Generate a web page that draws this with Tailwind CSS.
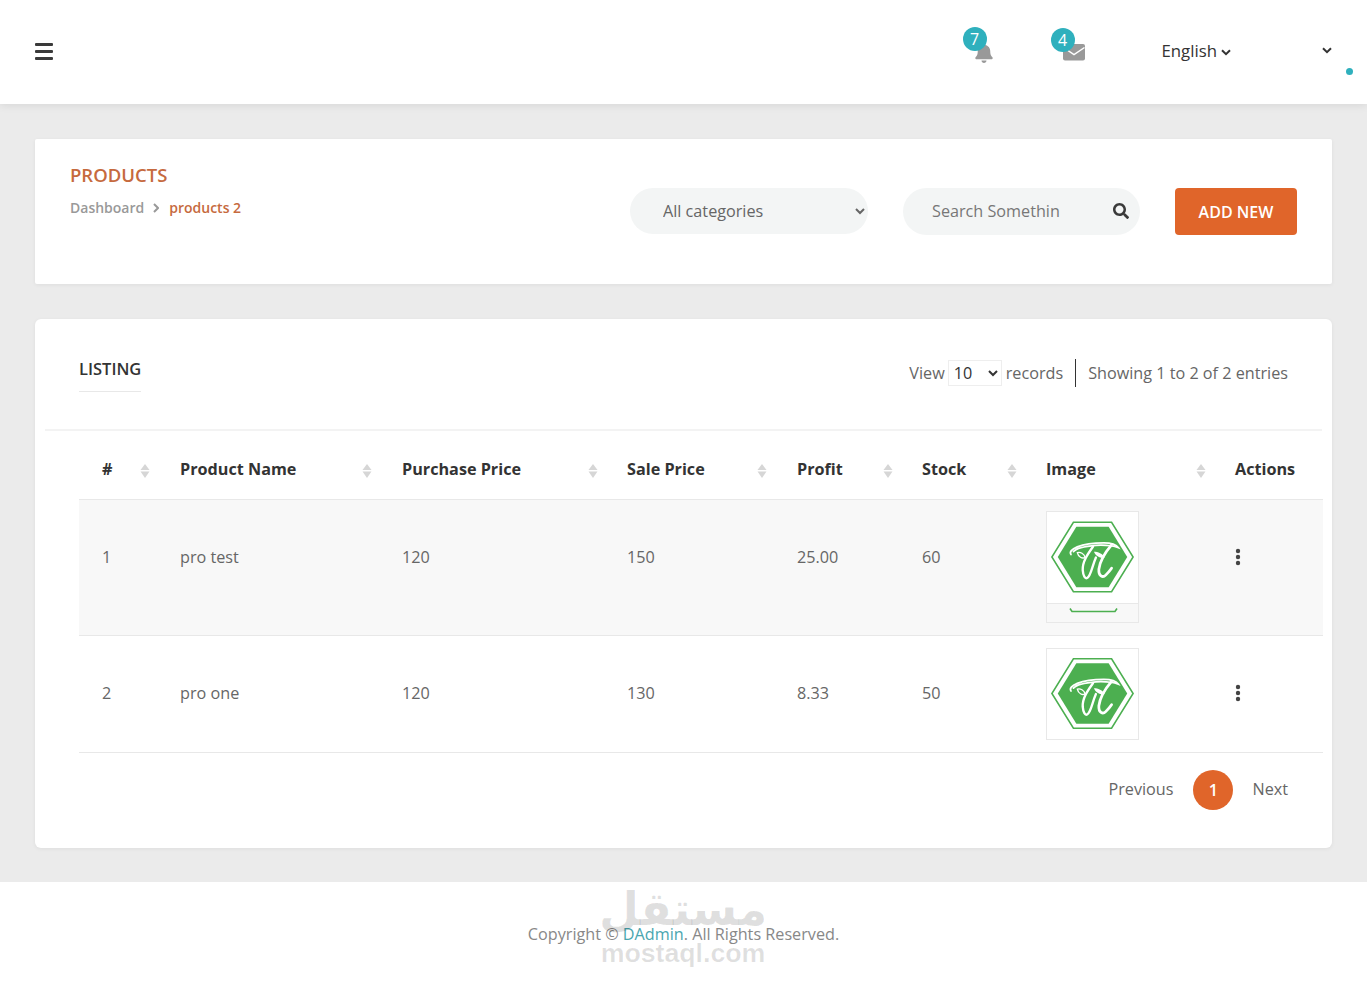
<!DOCTYPE html>
<html lang="en">
<head>
<meta charset="utf-8">
<title>Products</title>
<script src="https://cdn.jsdelivr.net/npm/@tailwindcss/browser@4"></script>
</head>
<body class="bg-[#ebebeb] font-['Open_Sans',sans-serif] text-[16.2px] text-[#666]">
<svg class="hidden" width="0" height="0">
  <symbol id="logo" viewBox="0 0 93 92">
    <path d="M27 10H66L88 45.5L66 81H27L5 45.5Z" fill="#fff" stroke="#4caf50" stroke-width="1.6"/>
    <path d="M30 14.5H63L82 45.5L63 76.5H30L11 45.5Z" fill="#4caf50"/>
    <path d="M24.5 43C21 38 34 31 58 31C65 31 71 33 73 36C66 33.5 58 33.2 50 33.6C40 34.5 30 36.5 27 40" fill="none" stroke="#fff" stroke-width="1.8" stroke-linecap="round"/>
    <path d="M31 41C34 40 38 42 39 46C36 47.5 32 45.5 31 41Z" fill="none" stroke="#fff" stroke-width="1.4"/>
    <path d="M47 35C42 42 36 50 36.5 59C37 65 39 68 41 67C45 65 46 55 50 46" fill="none" stroke="#fff" stroke-width="2.4" stroke-linecap="round"/>
    <path d="M48 40C52 40 57 42 59 46C55 47 50 45 48 40Z" fill="#fff"/>
    <path d="M66 33C60 40 54 50 53 58C52.5 65 57 67 60 64C62 62 64 60 66 57" fill="none" stroke="#fff" stroke-width="2.8" stroke-linecap="round"/>
  </symbol>
  <symbol id="sort" viewBox="0 0 10 14">
    <path d="M5 0L9.5 6H.5Z" fill="#d6d6d6"/><path d="M5 14L9.5 7.5H.5Z" fill="#d6d6d6"/>
  </symbol>
  <symbol id="kebab" viewBox="0 0 6 18">
    <circle cx="3" cy="3" r="2.2" fill="#444"/><circle cx="3" cy="9" r="2.2" fill="#444"/><circle cx="3" cy="15" r="2.2" fill="#444"/>
  </symbol>
</svg>

<header class="h-[104px] bg-white shadow-[0_2px_8px_rgba(0,0,0,0.08)] flex items-center pl-[35px] relative">
  <div class="w-[18px] flex flex-col gap-[3.5px] -mt-[1px]">
    <span class="block h-[3.5px] bg-[#3a3a3a] rounded-[1px]"></span>
    <span class="block h-[3.5px] bg-[#3a3a3a] rounded-[1px]"></span>
    <span class="block h-[3.5px] bg-[#3a3a3a] rounded-[1px]"></span>
  </div>
  <div class="ml-auto flex items-center text-[#333]">
    <div class="relative w-[20px] h-[20px] mt-[1px]">
      <svg class="w-[20px] h-[20px]" viewBox="0 0 448 512"><path fill="#999" d="M224 512c35.32 0 63.97-28.65 63.97-64H160.03c0 35.35 28.65 64 63.97 64zm215.39-149.71c-19.32-20.76-55.47-51.99-55.47-154.29 0-77.7-54.48-139.9-127.94-155.16V32c0-17.67-14.32-32-31.98-32s-31.98 14.33-31.98 32v20.84C118.56 68.1 64.08 130.3 64.08 208c0 102.3-36.15 133.53-55.47 154.29-6 6.45-8.66 14.16-8.61 21.71.11 16.4 12.98 32 32.1 32h383.8c19.12 0 32-15.6 32.1-32 .05-7.55-2.61-15.27-8.61-21.71z"/></svg>
      <span class="absolute -left-[11px] -top-[16px] w-[24px] h-[24px] rounded-full bg-[#2fb0bd] text-white text-[16px] leading-[24px] text-center">7</span>
    </div>
    <div class="relative w-[22px] h-[17px] ml-[69px]">
      <svg class="w-[22px] h-[17px] block" viewBox="0 0 22 17"><rect width="22" height="16.5" rx="2" fill="#999"/><path d="M0.5 3.5L11 10.5L21.5 3.5" fill="none" stroke="#fff" stroke-width="1.5"/></svg>
      <span class="absolute -left-[12px] -top-[16px] w-[24px] h-[24px] rounded-full bg-[#2fb0bd] text-white text-[16px] leading-[24px] text-center">4</span>
    </div>
    <span class="ml-[77px] text-[16.8px] leading-[24px] -mt-[2px]">English</span>
    <svg class="w-[10px] h-[7px] ml-[4px]" viewBox="0 0 10 7"><path d="M1 1.2L5 5.2L9 1.2" fill="none" stroke="#333" stroke-width="2"/></svg>
    <svg class="w-[10px] h-[7px] ml-[91px] mr-[35px] -mt-[3px]" viewBox="0 0 10 7"><path d="M1 1.2L5 5.2L9 1.2" fill="none" stroke="#333" stroke-width="2"/></svg>
  </div>
  <span class="absolute right-[14px] top-[68px] w-[7px] h-[7px] rounded-full bg-[#2fb0bd]"></span>
</header>

<main class="px-[35px] pt-[35px] pb-[34px]">
  <section class="h-[145px] bg-white rounded-[2px] shadow-[0_1px_4px_rgba(0,0,0,0.06)] px-[35px] flex items-start">
    <div class="pt-[22px]">
      <h1 class="text-[18.5px] leading-[28px] font-semibold text-[#c66a3e]">PRODUCTS</h1>
      <div class="flex items-center mt-[9px] text-[14px] leading-[20px] font-semibold">
        <span class="text-[#999]">Dashboard</span>
        <svg class="w-[6px] h-[10px] ml-[9px] mr-[10px]" viewBox="0 0 6 10"><path d="M1 1L5 5L1 9" fill="none" stroke="#999" stroke-width="2"/></svg>
        <span class="text-[#c66a3e]">products 2</span>
      </div>
    </div>
    <div class="ml-auto flex items-start gap-[35px] pt-[49px]">
      <select class="w-[238px] h-[46px] rounded-full bg-[#f3f5f5] pl-[29px] pr-[15px] text-[16.2px] text-[#666] font-['Open_Sans',sans-serif]">
        <option>All categories</option>
      </select>
      <div class="w-[237px] h-[47px] rounded-full bg-[#f3f5f5] flex items-center pl-[29px] pr-[11px]">
        <input class="w-[160px] -mt-[1px] bg-transparent text-[16.2px] placeholder:text-[#777] outline-none" placeholder="Search Somethin">
        <svg class="w-[16px] h-[16px] ml-auto -mt-[1px]" viewBox="0 0 512 512"><path fill="#3a3a3a" d="M505 442.7L405.3 343c-4.5-4.5-10.6-7-17-7H372c27.6-35.3 44-79.7 44-128C416 93.1 322.9 0 208 0S0 93.1 0 208s93.1 208 208 208c48.3 0 92.7-16.4 128-44v16.3c0 6.4 2.5 12.5 7 17l99.7 99.7c9.4 9.4 24.6 9.4 33.9 0l28.3-28.3c9.4-9.4 9.4-24.6.1-34zM208 336c-70.7 0-128-57.2-128-128 0-70.7 57.2-128 128-128 70.7 0 128 57.2 128 128 0 70.7-57.2 128-128 128z"/></svg>
      </div>
      <button class="w-[122px] h-[47px] rounded-[4px] bg-[#e0652a] text-white text-[16px] font-semibold">ADD NEW</button>
    </div>
  </section>

  <section class="mt-[35px] h-[529px] bg-white rounded-[6px] shadow-[0_1px_4px_rgba(0,0,0,0.06)]">
    <div class="mx-[10px] h-[112px] border-b-2 border-[#f3f3f3] px-[34px] flex justify-between items-start">
      <div class="pt-[38px] h-[73px] border-b border-[#e8e8e8]">
        <h2 class="text-[16.5px] leading-[24px] font-semibold text-[#333]">LISTING</h2>
      </div>
      <div class="flex items-center pt-[40px]">
        <span>View</span>
        <select class="ml-[3px] w-[54px] h-[26px] border border-[#eee] pl-[1px] pr-[7px] text-[16.2px] text-[#333]"><option>10</option></select>
        <span class="ml-[4px]">records</span>
        <span class="w-px h-[28px] bg-[#333] ml-[12px] mr-[12px]"></span>
        <span>Showing 1 to 2 of 2 entries</span>
      </div>
    </div>

    <table class="ml-[44px] w-[1244px] table-fixed border-collapse text-left">
      <thead>
        <tr class="h-[68px] border-b border-[#e8e8e8] text-[#333] font-bold">
          <th class="w-[78px] pl-[23px] pt-[8px] font-bold relative">#<svg class="absolute right-[7px] top-[33px] w-[10px] h-[14px]"><use href="#sort"/></svg></th>
          <th class="w-[222px] pl-[23px] pt-[8px] font-bold relative">Product Name<svg class="absolute right-[7px] top-[33px] w-[10px] h-[14px]"><use href="#sort"/></svg></th>
          <th class="w-[225px] pl-[23px] pt-[8px] font-bold relative">Purchase Price<svg class="absolute right-[6px] top-[33px] w-[10px] h-[14px]"><use href="#sort"/></svg></th>
          <th class="w-[170px] pl-[23px] pt-[8px] font-bold relative">Sale Price<svg class="absolute right-[7px] top-[33px] w-[10px] h-[14px]"><use href="#sort"/></svg></th>
          <th class="w-[125px] pl-[23px] pt-[8px] font-bold relative">Profit<svg class="absolute right-[6px] top-[33px] w-[10px] h-[14px]"><use href="#sort"/></svg></th>
          <th class="w-[124px] pl-[23px] pt-[8px] font-bold relative">Stock<svg class="absolute right-[6px] top-[33px] w-[10px] h-[14px]"><use href="#sort"/></svg></th>
          <th class="w-[189px] pl-[23px] pt-[8px] font-bold relative">Image<svg class="absolute right-[6px] top-[33px] w-[10px] h-[14px]"><use href="#sort"/></svg></th>
          <th class="w-[111px] pl-[23px] pt-[8px] font-bold">Actions</th>
        </tr>
      </thead>
      <tbody>
        <tr class="h-[136px] bg-[#f8f8f8] border-b border-[#e8e8e8] align-top">
          <td class="pl-[23px] pt-[45px]">1</td>
          <td class="pl-[23px] pt-[45px]">pro test</td>
          <td class="pl-[23px] pt-[45px]">120</td>
          <td class="pl-[23px] pt-[45px]">150</td>
          <td class="pl-[23px] pt-[45px]">25.00</td>
          <td class="pl-[23px] pt-[45px]">60</td>
          <td class="pl-[23px] pt-[11px]">
            <div class="w-[93px] h-[93px] border border-[#e8e8e8] bg-white"><svg class="w-[91px] h-[91px] block"><use href="#logo"/></svg></div>
            <div class="w-[93px] h-[19px] border border-t-0 border-[#e8e8e8]"><svg class="w-[91px] h-[18px] block" viewBox="0 0 91 18"><path d="M23 4.5L25 7.5H68L70 4.5" fill="none" stroke="#4caf50" stroke-width="1.6"/></svg></div>
          </td>
          <td class="pl-[23px] pt-[48px]"><svg class="w-[6px] h-[18px] block"><use href="#kebab"/></svg></td>
        </tr>
        <tr class="h-[117px] border-b border-[#e8e8e8] align-top">
          <td class="pl-[23px] pt-[45px]">2</td>
          <td class="pl-[23px] pt-[45px]">pro one</td>
          <td class="pl-[23px] pt-[45px]">120</td>
          <td class="pl-[23px] pt-[45px]">130</td>
          <td class="pl-[23px] pt-[45px]">8.33</td>
          <td class="pl-[23px] pt-[45px]">50</td>
          <td class="pl-[23px] pt-[12px]">
            <div class="w-[93px] h-[92px] border border-[#e8e8e8] bg-white"><svg class="w-[91px] h-[90px] block"><use href="#logo"/></svg></div>
          </td>
          <td class="pl-[23px] pt-[48px]"><svg class="w-[6px] h-[18px] block"><use href="#kebab"/></svg></td>
        </tr>
      </tbody>
    </table>

    <div class="flex items-center justify-end pr-[44px] pt-[17px]">
      <span>Previous</span>
      <span class="w-[40px] h-[40px] rounded-full bg-[#e0652a] text-white font-semibold text-center leading-[40px] ml-[20px] mr-[19px]">1</span>
      <span>Next</span>
    </div>
  </section>
</main>

<footer class="h-[105px] bg-white relative flex items-center justify-center">
  <p class="text-[#888] -mt-[1px]">Copyright © <span class="text-[#4aa6b0]">DAdmin</span>. All Rights Reserved.</p>
  <div class="absolute left-[596px] -top-[3px] w-[174px] text-black/12 pointer-events-none flex flex-col items-center">
    <div class="font-['DejaVu_Sans',sans-serif] font-bold text-[46px] leading-[60px] whitespace-nowrap">مستقل</div>
    <div class="font-['Liberation_Sans',sans-serif] font-bold text-[26.7px] leading-[28px] whitespace-nowrap">mostaql.com</div>
  </div>
</footer>
</body>
</html>
